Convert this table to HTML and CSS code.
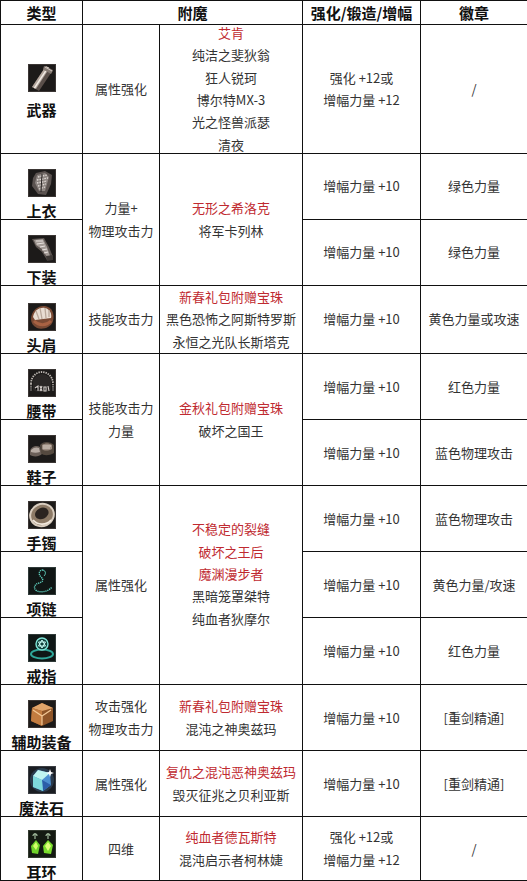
FILE: index.html
```html
<!DOCTYPE html>
<html lang="zh-CN">
<head>
<meta charset="utf-8">
<title>装备附魔</title>
<link rel="stylesheet" href="styles.css">
</head>
<body>
<table class="gear">
  <colgroup>
    <col class="c1"><col class="c2"><col class="c3"><col class="c4"><col class="c5">
  </colgroup>
  <thead>
    <tr class="r-head">
      <th>类型</th>
      <th colspan="2">附魔</th>
      <th>强化/锻造/增幅</th>
      <th>徽章</th>
    </tr>
  </thead>
  <tbody>
    <tr class="r-weapon">
      <td class="type type-mid">
        <svg class="icon" viewBox="0 0 28 28"><rect width="28" height="28" fill="#1c1a19"/><rect x="0.5" y="0.5" width="27" height="27" fill="none" stroke="#3b3634"/><path d="M18 2 L25 6 L11 27 L4 23 Z" fill="#5a4f4a"/><path d="M18 2 L21.5 4 L8 25 L4 23 Z" fill="#b3a69d"/><path d="M19.5 3 L20.7 3.7 L7 24.5 L5.8 23.8 Z" fill="#f2ece6"/><path d="M16 2 L25 6.5 L23 10 L15 5.5 Z" fill="#857a73"/><path d="M17 3 L24 7" stroke="#cfc6bf" stroke-width="1"/></svg>
        <div class="label">武器</div>
      </td>
      <td>属性强化</td>
      <td><div class="stack"><span class="red">艾肯</span><br>纯洁之斐狄翁<br>狂人锐珂<br>博尔特MX-3<br>光之怪兽派瑟<br>清夜</div></td>
      <td>强化 +12或<br>增幅力量 +12</td>
      <td>/</td>
    </tr>
    <tr class="r-std">
      <td class="type">
        <svg class="icon" viewBox="0 0 28 28"><rect width="28" height="28" fill="#1c1a19"/><rect x="0.5" y="0.5" width="27" height="27" fill="none" stroke="#3b3634"/><path d="M8 4 L17 2 L24 6 L23 15 L18 26 L10 25 L4 17 L5 9 Z" fill="#5b5350"/><path d="M9 6 L17 4 L21 8 L17 22 L11 22 L7 14 Z" fill="#8d8581"/><path d="M10 8 L19 6 M9 11 L20 9 M9 14 L19 12 M10 17 L18 15 M11 20 L17 18" stroke="#e2dcd8" stroke-width="1.3" stroke-dasharray="1.5 1"/><path d="M14 5 L13 23" stroke="#2a2625" stroke-width="1"/></svg>
        <div class="label">上衣</div>
      </td>
      <td rowspan="2">力量+<br>物理攻击力</td>
      <td rowspan="2"><span class="red">无形之希洛克</span><br>将军卡列林</td>
      <td>增幅力量 +10</td>
      <td>绿色力量</td>
    </tr>
    <tr class="r-std">
      <td class="type">
        <svg class="icon" viewBox="0 0 28 28"><rect width="28" height="28" fill="#1c1a19"/><rect x="0.5" y="0.5" width="27" height="27" fill="none" stroke="#3b3634"/><path d="M4 4 L16 3 L21 12 L25 22 L19 25 L14 17 L8 12 Z" fill="#5e5652"/><path d="M6 5 L15 4 L19 12 L22 21 L19 22 L14 14 L8 10 Z" fill="#a39b96"/><path d="M8 6 L15 6 M9 9 L16 8 M12 12 L17 11 M14 15 L19 14 M16 18 L20 17" stroke="#e6e0dc" stroke-width="1.2"/><path d="M18 21 L25 20 L25 25 L19 26 Z" fill="#3e3936"/></svg>
        <div class="label">下装</div>
      </td>
      <td>增幅力量 +10</td>
      <td>绿色力量</td>
    </tr>
    <tr class="r-std">
      <td class="type">
        <svg class="icon" viewBox="0 0 28 28"><rect width="28" height="28" fill="#1c1a19"/><rect x="0.5" y="0.5" width="27" height="27" fill="none" stroke="#3b3634"/><path d="M3 16 C3 8 10 2 17 3 C24 4 27 11 25 18 C23 25 14 27 9 25 C5 23 3 20 3 16 Z" fill="#7a4a34"/><path d="M5 14 C6 8 11 4 17 5 C22 6 24 11 23 15 L7 17 Z" fill="#e8ddd2"/><path d="M8 8 L11 16 M12 5 L14 16 M17 5 L18 15 M21 7 L21 14" stroke="#b9a89a" stroke-width="1.3"/><path d="M6 18 C11 23 18 23 23 18" stroke="#a86243" stroke-width="3" fill="none"/></svg>
        <div class="label">头肩</div>
      </td>
      <td>技能攻击力</td>
      <td><span class="red">新春礼包附赠宝珠</span><br>黑色恐怖之阿斯特罗斯<br>永恒之光队长斯塔克</td>
      <td>增幅力量 +10</td>
      <td>黄色力量或攻速</td>
    </tr>
    <tr class="r-std">
      <td class="type">
        <svg class="icon" viewBox="0 0 28 28"><rect width="28" height="28" fill="#1c1a19"/><rect x="0.5" y="0.5" width="27" height="27" fill="none" stroke="#3b3634"/><path d="M5 12 C6 8 10 5 14 5 C18 5 22 8 23 12 L23 21 C20 24 8 24 5 21 Z" fill="#2a2726"/><path d="M3 15 C3 7 9 3 14 3 C19 3 25 7 25 15" stroke="#bdb7b2" stroke-width="1.8" fill="none" stroke-dasharray="1.4 1"/><path d="M3 15 L3 22 M25 15 L25 22" stroke="#a9a39e" stroke-width="1.6" stroke-dasharray="1.2 1"/><path d="M7 19 L10 17 L10 22 M12 17 L14 22 M14 17 L12 22 M16 18 L18 18 L18 22 L16 22 Z M20 17 L21 22" stroke="#d8d2ce" stroke-width="1.1"/></svg>
        <div class="label">腰带</div>
      </td>
      <td rowspan="2">技能攻击力<br>力量</td>
      <td rowspan="2"><span class="red">金秋礼包附赠宝珠</span><br>破坏之国王</td>
      <td>增幅力量 +10</td>
      <td>红色力量</td>
    </tr>
    <tr class="r-std">
      <td class="type">
        <svg class="icon" viewBox="0 0 28 28"><rect width="28" height="28" fill="#1c1a19"/><rect x="0.5" y="0.5" width="27" height="27" fill="none" stroke="#3b3634"/><path d="M2 16 C3 11 9 10 12 12 L14 19 C11 22 5 22 2 20 Z" fill="#6b5f58"/><path d="M3 15 C6 12 9 12 11 13 L12 17 C9 18 6 18 3 17 Z" fill="#b7aba3"/><path d="M12 10 C15 6 22 6 26 10 L26 18 C21 21 15 21 13 18 Z" fill="#54493f"/><path d="M14 10 C17 8 21 8 24 10 L24 14 C20 16 16 16 14 14 Z" fill="#9b8b7f"/><path d="M15 11 L23 11 M15 13 L22 13" stroke="#ddd2c8" stroke-width="1"/></svg>
        <div class="label">鞋子</div>
      </td>
      <td>增幅力量 +10</td>
      <td>蓝色物理攻击</td>
    </tr>
    <tr class="r-std">
      <td class="type">
        <svg class="icon" viewBox="0 0 28 28"><rect width="28" height="28" fill="#1c1a19"/><rect x="0.5" y="0.5" width="27" height="27" fill="none" stroke="#3b3634"/><ellipse cx="14" cy="14" rx="12" ry="11" transform="rotate(-25 14 14)" fill="#8d7a66"/><ellipse cx="14" cy="14" rx="12" ry="11" transform="rotate(-25 14 14)" fill="none" stroke="#d9cdbf" stroke-width="2"/><ellipse cx="14.5" cy="12.5" rx="7" ry="5.5" transform="rotate(-25 14 14)" fill="#2b2420"/><path d="M5 19 C9 24 18 25 23 19" stroke="#f1e8dd" stroke-width="1.8" fill="none"/></svg>
        <div class="label">手镯</div>
      </td>
      <td rowspan="3">属性强化</td>
      <td rowspan="3" class="tail"><span class="red">不稳定的裂缝</span><br><span class="red">破坏之王后</span><br><span class="red">魔渊漫步者</span><br>黑暗笼罩桀特<br>纯血者狄摩尔</td>
      <td>增幅力量 +10</td>
      <td>蓝色物理攻击</td>
    </tr>
    <tr class="r-std">
      <td class="type">
        <svg class="icon" viewBox="0 0 28 28"><rect width="28" height="28" fill="#101615"/><rect x="0.5" y="0.5" width="27" height="27" fill="none" stroke="#2f3a38"/><path d="M15 3 C11 3 10 7 13 10 C16 13 15 15 11 16 C6 17 5 22 9 24 C14 26 21 24 24 20" stroke="#5fd0bf" stroke-width="1.4" fill="none" stroke-dasharray="1.2 0.8"/><path d="M15 3 C18 4 18 7 16 9" stroke="#5fd0bf" stroke-width="1" fill="none"/></svg>
        <div class="label">项链</div>
      </td>
      <td>增幅力量 +10</td>
      <td>黄色力量/攻速</td>
    </tr>
    <tr class="r-ring">
      <td class="type">
        <svg class="icon" viewBox="0 0 28 28"><rect width="28" height="28" fill="#0f1716"/><rect x="0.5" y="0.5" width="27" height="27" fill="none" stroke="#2f3a38"/><ellipse cx="14" cy="20" rx="11" ry="4.5" fill="none" stroke="#2fa79a" stroke-width="2"/><circle cx="14" cy="10" r="6" fill="#11403b" stroke="#7fe3d6" stroke-width="1.4"/><path d="M14 6 L17.5 12 L10.5 12 Z M14 14 L10.5 8 L17.5 8 Z" fill="none" stroke="#c9fff6" stroke-width="1"/></svg>
        <div class="label">戒指</div>
      </td>
      <td>增幅力量 +10</td>
      <td>红色力量</td>
    </tr>
    <tr class="r-std">
      <td class="type">
        <svg class="icon" viewBox="0 0 28 28"><rect width="28" height="28" fill="#1c1a19"/><rect x="0.5" y="0.5" width="27" height="27" fill="none" stroke="#3b3634"/><path d="M4 8 L14 3 L25 8 L25 21 L14 26 L3 21 Z" fill="#8f5528"/><path d="M4 8 L14 11 L25 8 L14 3 Z" fill="#e0a46a"/><path d="M4 8 L14 11 L14 26 L3 21 Z" fill="#c27c40"/><path d="M5 10 L14 16 L23 10 M14 16 L14 25" stroke="#f4c996" stroke-width="1.2" fill="none"/></svg>
        <div class="label">辅助装备</div>
      </td>
      <td>攻击强化<br>物理攻击力</td>
      <td><span class="red">新春礼包附赠宝珠</span><br>混沌之神奥兹玛</td>
      <td>增幅力量 +10</td>
      <td>[重剑精通]</td>
    </tr>
    <tr class="r-std">
      <td class="type">
        <svg class="icon" viewBox="0 0 28 28"><rect width="28" height="28" fill="#1a1d22"/><rect x="0.5" y="0.5" width="27" height="27" fill="none" stroke="#3a3d42"/><circle cx="14" cy="14" r="12" fill="#3a5a78" opacity="0.5"/><path d="M10 4 L22 7 L23 19 L15 25 L5 21 L5 10 Z" fill="#4d8fd0"/><path d="M10 4 L22 7 L14 14 L5 10 Z" fill="#bff4f0"/><path d="M14 14 L23 19 L15 25 Z" fill="#2b5da8"/><path d="M5 10 L14 14 L15 25 L5 21 Z" fill="#7ed9dc"/><path d="M22 3 L23 6 L26 7 L23 8 L22 11 L21 8 L18 7 L21 6 Z" fill="#ffffff"/></svg>
        <div class="label">魔法石</div>
      </td>
      <td>属性强化</td>
      <td><span class="red">复仇之混沌恶神奥兹玛</span><br>毁灭征兆之贝利亚斯</td>
      <td>增幅力量 +10</td>
      <td>[重剑精通]</td>
    </tr>
    <tr class="r-last">
      <td class="type">
        <svg class="icon" viewBox="0 0 28 28"><rect width="28" height="28" fill="#141a12"/><rect x="0.5" y="0.5" width="27" height="27" fill="none" stroke="#333a30"/><path d="M7 3 L7 9 M20 3 L20 9 M5 6 C5 3 9 3 9 6 M18 6 C18 3 22 3 22 6" stroke="#9fb89a" stroke-width="1.2" fill="none"/><path d="M3 16 L8 10 L12 15 L10 24 L4 23 Z" fill="#6fd22a"/><path d="M5 16 L8 12 L10 16 L8 20 Z" fill="#d4ff6a"/><path d="M15 16 L20 10 L25 15 L23 24 L16 23 Z" fill="#79dd2c"/><path d="M17 16 L20 12 L23 16 L20 21 Z" fill="#e0ff7a"/></svg>
        <div class="label">耳环</div>
      </td>
      <td>四维</td>
      <td><span class="red">纯血者德瓦斯特</span><br>混沌启示者柯林婕</td>
      <td>强化 +12或<br>增幅力量 +12</td>
      <td>/</td>
    </tr>
  </tbody>
</table>
</body>
</html>
```

FILE: styles.css
```css
html, body {
  margin: 0;
  padding: 0;
  background: #ffffff;
}

body {
  font-family: "Noto Sans CJK SC", "Noto Sans", sans-serif;
  color: #333333;
}

.gear {
  width: 527px;
  border-collapse: collapse;
  table-layout: fixed;
}

.c1 { width: 82px; }
.c2 { width: 77px; }
.c3 { width: 143px; }
.c4 { width: 118px; }
.c5 { width: 107px; }

.gear th,
.gear td {
  border: 1px solid #111111;
  padding: 0;
  text-align: center;
  vertical-align: middle;
  font-size: 13px;
  line-height: 22.4px;
  white-space: nowrap;
}

.gear th {
  font-size: 15px;
  font-weight: 700;
  color: #111111;
  line-height: 20px;
}

.r-head { height: 24px; }
.r-weapon { height: 129px; }
.r-std { height: 66px; }
.r-ring { height: 67px; }
.r-last { height: 64px; }

.stack {
  margin: -4px 0;
}

.red {
  color: #bf2a30;
}

.tail {
  padding-bottom: 22px !important;
}

.type {
  vertical-align: bottom !important;
}

.type-mid {
  padding-bottom: 35px !important;
}

.icon {
  display: block;
  width: 28px;
  height: 28px;
  margin: 0 auto 5px;
}

.type-mid .icon {
  margin-bottom: 9px;
}

.label {
  font-size: 15px;
  font-weight: 700;
  color: #111111;
  line-height: 17px;
  height: 17px;
}
```
